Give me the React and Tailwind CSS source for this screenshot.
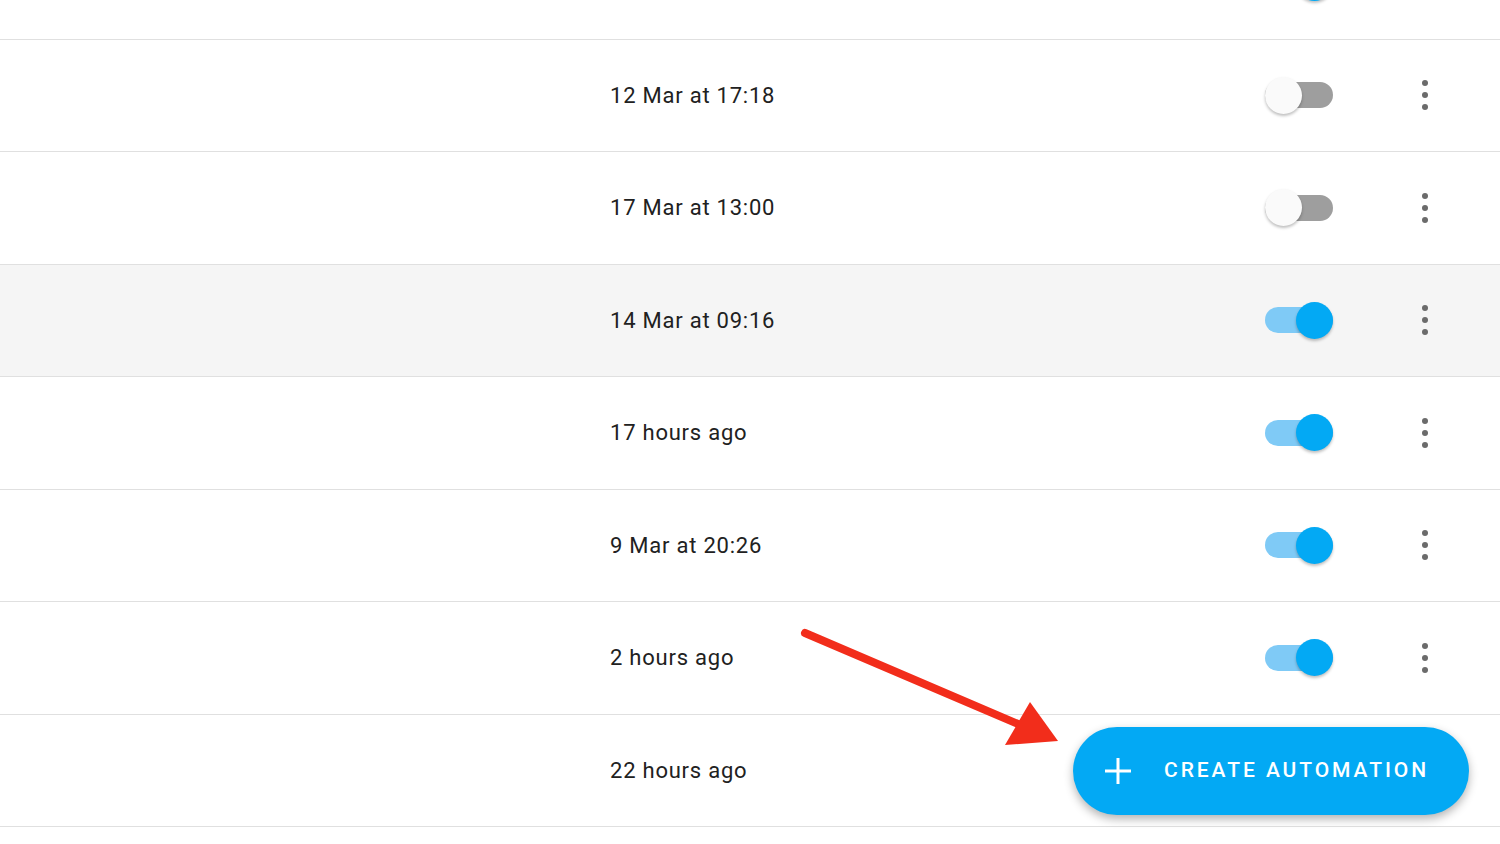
import React from "react";

const rows = [
  { time: "", on: true },
  { time: "12 Mar at 17:18", on: false },
  { time: "17 Mar at 13:00", on: false },
  { time: "14 Mar at 09:16", on: true, active: true },
  { time: "17 hours ago", on: true },
  { time: "9 Mar at 20:26", on: true },
  { time: "2 hours ago", on: true },
  { time: "22 hours ago", on: null },
];

function Toggle({ on }) {
  return (
    <div className="relative w-[68px] h-[40px] flex items-center">
      <div
        className={`absolute left-0 right-0 h-[26px] rounded-full ${
          on ? "bg-[#7fcaf6]" : "bg-[#9e9e9e]"
        }`}
      />
      <div
        className={`absolute w-[37px] h-[37px] rounded-full shadow-[0_2px_3px_rgba(0,0,0,0.25)] ${
          on ? "right-0 bg-[#03a9f4]" : "left-0 bg-[#fafafa]"
        }`}
      />
    </div>
  );
}

function MoreIcon() {
  return (
    <div className="w-[48px] h-[48px] flex flex-col items-center justify-center gap-[6px]">
      <span className="w-[6px] h-[6px] rounded-full bg-[#6b6b6b]" />
      <span className="w-[6px] h-[6px] rounded-full bg-[#6b6b6b]" />
      <span className="w-[6px] h-[6px] rounded-full bg-[#6b6b6b]" />
    </div>
  );
}

export default function App() {
  return (
    <div
      className="relative w-full h-[844px] overflow-hidden bg-white text-[#212121]"
      style={{ fontFamily: "Roboto, 'Liberation Sans', sans-serif" }}
    >
      <div className="-mt-[73px]">
        {rows.map((r, i) => (
          <div
            key={i}
            className={`grid grid-cols-[610px_1fr_auto_auto] items-center h-[112.5px] border-b border-[#e0e0e0] pr-[51px] ${
              r.active ? "bg-[#f5f5f5]" : "bg-white"
            }`}
          >
            <div />
            <div className="text-[22px] tracking-[0.035em]">{r.time}</div>
            <div className="mr-[68px]">{r.on !== null && <Toggle on={r.on} />}</div>
            <div className="w-[48px]">{r.on !== null && <MoreIcon />}</div>
          </div>
        ))}
      </div>

      {/* Create automation FAB */}
      <button className="absolute left-[1073px] top-[727px] w-[396px] h-[88px] rounded-full bg-[#03a9f4] text-white flex items-center shadow-[0_4px_10px_rgba(0,0,0,0.3)]">
        <svg width="30" height="30" viewBox="0 0 30 30" className="ml-[30px]">
          <path d="M15 2v26M2 15h26" stroke="white" strokeWidth="3" />
        </svg>
        <span className="ml-[31px] text-[21px] font-medium tracking-[0.14em]">CREATE AUTOMATION</span>
      </button>

      {/* Annotation arrow */}
      <svg className="absolute left-0 top-0 pointer-events-none" width="1500" height="844">
        <line x1="805" y1="633" x2="1025" y2="727" stroke="#f22d1b" strokeWidth="8" strokeLinecap="round" />
        <polygon points="1058,741 1005,745 1030,702" fill="#f22d1b" />
      </svg>
    </div>
  );
}
